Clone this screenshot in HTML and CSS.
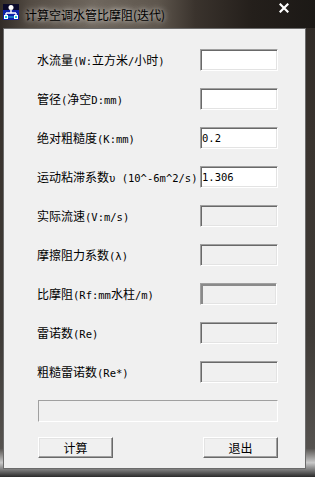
FILE: index.html
```html
<!DOCTYPE html>
<html lang="zh-CN">
<head>
    <meta charset="UTF-8">
    <title>计算空调水管比摩阻(迭代)</title>
    <link rel="stylesheet" href="styles.css">
</head>
<body>
    <div class="window">
        <div class="titlebar">
            <svg class="app-icon" width="16" height="16" viewBox="0 0 16 16">
                <rect width="16" height="16" fill="#0c22a8" />
                <rect width="16" height="6" fill="#0a0a2a" />
                <circle cx="8" cy="3.5" r="2.5" fill="#fff" />
                <path d="M8 6v3M3 9h10M3 9v2M13 9v2" stroke="#fff" stroke-width="1.4" fill="none" />
                <rect x="1" y="11" width="4" height="4" fill="#fff" />
                <rect x="11" y="11" width="4" height="4" fill="#fff" />
                <rect x="2" y="12" width="2" height="2" fill="#1ec8d8" />
                <rect x="12" y="12" width="2" height="2" fill="#1ec8d8" />
                <path d="M5 13h6" stroke="#1ec8d8" stroke-width="1" />
            </svg>
            <span class="title">计算空调水管比摩阻(迭代)</span>
            <svg class="close" width="10" height="10" viewBox="0 0 10 10">
                <path d="M1.5 1.5L8.5 8.5M8.5 1.5L1.5 8.5" stroke="#fff" stroke-width="2.2" stroke-linecap="square" />
            </svg>
        </div>
        <div class="frame">
            <div class="client">
                <div class="form">
                    <label>水流量<span class="en">(W:</span>立方米<span class="en">/</span>小时<span class="en">)</span></label>
                    <input class="box" type="text" value="">

                    <label>管径<span class="en">(</span>净空<span class="en">D:mm)</span></label>
                    <input class="box" type="text" value="">

                    <label>绝对粗糙度<span class="en">(K:mm)</span></label>
                    <input class="box" type="text" value="0.2">

                    <label>运动粘滞系数<span class="en">υ (10^-6m^2/s)</span></label>
                    <input class="box" type="text" value="1.306">

                    <label>实际流速<span class="en">(V:m/s)</span></label>
                    <input class="box" type="text" readonly>

                    <label>摩擦阻力系数<span class="en">(λ)</span></label>
                    <input class="box" type="text" readonly>

                    <label>比摩阻<span class="en">(Rf:mm</span>水柱<span class="en">/m)</span></label>
                    <input class="box deep" type="text" readonly>

                    <label>雷诺数<span class="en">(Re)</span></label>
                    <input class="box" type="text" readonly>

                    <label>粗糙雷诺数<span class="en">(Re*)</span></label>
                    <input class="box" type="text" readonly>
                </div>
                <div class="progress"></div>
                <div class="buttons">
                    <button>计算</button>
                    <button>退出</button>
                </div>
            </div>
        </div>
    </div>
</body>
</html>
```

FILE: styles.css
```css
body {
    margin: 0;
    width: 315px;
    height: 477px;
    overflow: hidden;
    font-family: "Noto Sans CJK SC", sans-serif;
    background: linear-gradient(180deg, #2e2925 0%, #3a342f 30%, #3f3b37 70%, #55524f 94%, #c9c9c9 97%, #2a2a2a 100%);
}

.window {
    display: flex;
    flex-direction: column;
    height: 477px;
}

.titlebar {
    height: 28px;
    display: flex;
    align-items: center;
    padding-left: 3px;
    background: linear-gradient(90deg, #322c27 0%, #544c44 10%, #6f675e 30%, #5e564d 50%, #3a332d 62%, #241f1b 80%, #1c1916 100%);
}

.app-icon {
    align-self: flex-start;
    margin-top: 4px;
}

.title {
    margin-left: 6px;
    font-size: 12px;
    color: #000;
    text-shadow: 0 0 5px rgba(255, 255, 255, 0.7), 0 0 9px rgba(235, 230, 220, 0.6);
}

.close {
    align-self: flex-start;
    margin: 3px 26px 0 auto;
}

.frame {
    flex: 1;
    display: flex;
    padding: 0 9px 8px 3px;
}

.client {
    flex: 1;
    display: flex;
    flex-direction: column;
    background-color: #f0f0f0;
    border: 1px solid #6b6b6b;
    padding: 20px 27px 0 33px;
}

.form {
    display: grid;
    grid-template-columns: 1fr 78px;
    grid-auto-rows: 22px;
    row-gap: 17px;
    align-items: center;
}

label {
    font-size: 12px;
    line-height: 22px;
    color: #000;
    white-space: nowrap;
}

.en {
    font-family: "DejaVu Sans Mono", monospace;
    font-size: 10.5px;
}

.box {
    width: 78px;
    height: 22px;
    box-sizing: border-box;
    margin: 0;
    padding: 0 1px;
    border: 1px solid;
    border-color: #a0a0a0 #fff #fff #a0a0a0;
    box-shadow: inset 1px 1px 0 #696969, inset -1px -1px 0 #e3e3e3;
    background-color: #fff;
    font-family: "DejaVu Sans Mono", monospace;
    font-size: 10.5px;
    color: #000;
    outline: none;
}

.box[readonly] {
    background-color: #f0f0f0;
}

.box.deep {
    width: 77px;
    box-shadow: inset 2px 2px 0 #8a8a8a, inset -1px -1px 0 #e3e3e3;
}

.progress {
    margin: 17px 0 0 1px;
    height: 22px;
    box-sizing: border-box;
    border: 1px solid;
    border-color: #a0a0a0 #fff #fff #a0a0a0;
}

.buttons {
    display: flex;
    justify-content: space-between;
    margin-top: 15px;
    padding-left: 1px;
}

button {
    width: 75px;
    height: 21px;
    box-sizing: border-box;
    padding: 0;
    border: 1px solid;
    border-color: #fff #696969 #696969 #fff;
    box-shadow: inset -1px -1px 0 #a0a0a0, inset 1px 1px 0 #e3e3e3;
    background-color: #f0f0f0;
    font-family: "Noto Sans CJK SC", sans-serif;
    font-size: 12px;
    color: #000;
}
```
